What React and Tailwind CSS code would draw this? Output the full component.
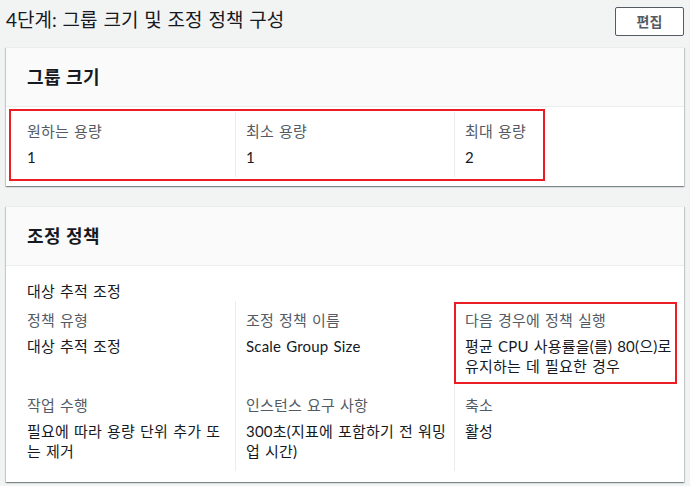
import React from "react";

const font = { fontFamily: 'Lato, "Noto Sans CJK KR", sans-serif' };

const Cell = ({ label, value, first, pr = "pr-[8px]" }) => (
  <div
    className={
      "pt-[9px] pb-[10px] " +
      pr +
      " " +
      (first ? "pl-[11px]" : "border-l border-[#eaeded] pl-[10px]")
    }
  >
    <div className="text-[15px] leading-[20px] tracking-[0.2px] [word-spacing:1px] text-[#545b64]">{label}</div>
    <div className="mt-[6px] text-[15px] leading-[20px] tracking-[0.2px] [word-spacing:1px] text-[#16191f]">{value}</div>
  </div>
);

const CardHeader = ({ title }) => (
  <div className="h-[59px] flex items-center pl-[21px] bg-[#fafafa] border-b border-[#eaeded]">
    <h2 className="text-[18px] leading-[24px] font-bold tracking-[0.5px] text-[#16191f]">{title}</h2>
  </div>
);

const App = () => {
  return (
    <div style={font} className="w-[690px] h-[486px] bg-[#f2f3f3] px-[6px] overflow-hidden">
      {/* page header */}
      <div className="flex items-start justify-between pt-[7px] h-[47px]">
        <h1 className="text-[19px] leading-[26px] [word-spacing:1px] text-[#16191f]">4단계: 그룹 크기 및 조정 정책 구성</h1>
        <button className="w-[69px] h-[29px] border border-[#545b64] rounded-[2px] bg-white text-[14px] font-bold text-[#545b64]">
          편집
        </button>
      </div>

      {/* group size */}
      <div className="bg-white border-t border-[#eaeded] shadow-[0_1px_1px_0_rgba(0,28,36,0.3),1px_1px_1px_0_rgba(0,28,36,0.15),-1px_1px_1px_0_rgba(0,28,36,0.15)]">
        <CardHeader title="그룹 크기" />
        <div className="pt-[5px] pb-[9px] pl-[10px]">
          <div className="relative grid grid-cols-[219px_219px_219px]">
            <Cell first label="원하는 용량" value="1" />
            <Cell label="최소 용량" value="1" />
            <Cell label="최대 용량" value="2" />
            <div className="absolute left-[-7px] top-[-3px] w-[536px] h-[72px] border-2 border-[#ec1c24] pointer-events-none" />
          </div>
        </div>
      </div>

      {/* scaling policy */}
      <div className="mt-[20px] bg-white border-t border-[#eaeded] shadow-[0_1px_1px_0_rgba(0,28,36,0.3),1px_1px_1px_0_rgba(0,28,36,0.15),-1px_1px_1px_0_rgba(0,28,36,0.15)]">
        <CardHeader title="조정 정책" />
        <div className="pt-[15px] pb-[11px] pl-[10px]">
          <div className="pl-[11px] text-[15px] leading-[20px] tracking-[0.2px] [word-spacing:1px] text-[#16191f]">대상 추적 조정</div>
          <div className="relative grid grid-cols-[219px_219px_219px]">
            <Cell first label="정책 유형" value="대상 추적 조정" />
            <Cell pr="pr-[2px]" label="조정 정책 이름" value="Scale Group Size" />
            <Cell pr="pr-0" label="다음 경우에 정책 실행" value="평균 CPU 사용률을(를) 80(으)로 유지하는 데 필요한 경우" />
            <Cell first label="작업 수행" value="필요에 따라 용량 단위 추가 또는 제거" />
            <Cell pr="pr-[2px]" label="인스턴스 요구 사항" value="300초(지표에 포함하기 전 워밍업 시간)" />
            <Cell pr="pr-0" label="축소" value="활성" />
            <div className="absolute left-[438px] top-[1px] w-[223px] h-[82px] border-2 border-[#ec1c24] pointer-events-none" />
          </div>
        </div>
      </div>
    </div>
  );
};

export default App;
